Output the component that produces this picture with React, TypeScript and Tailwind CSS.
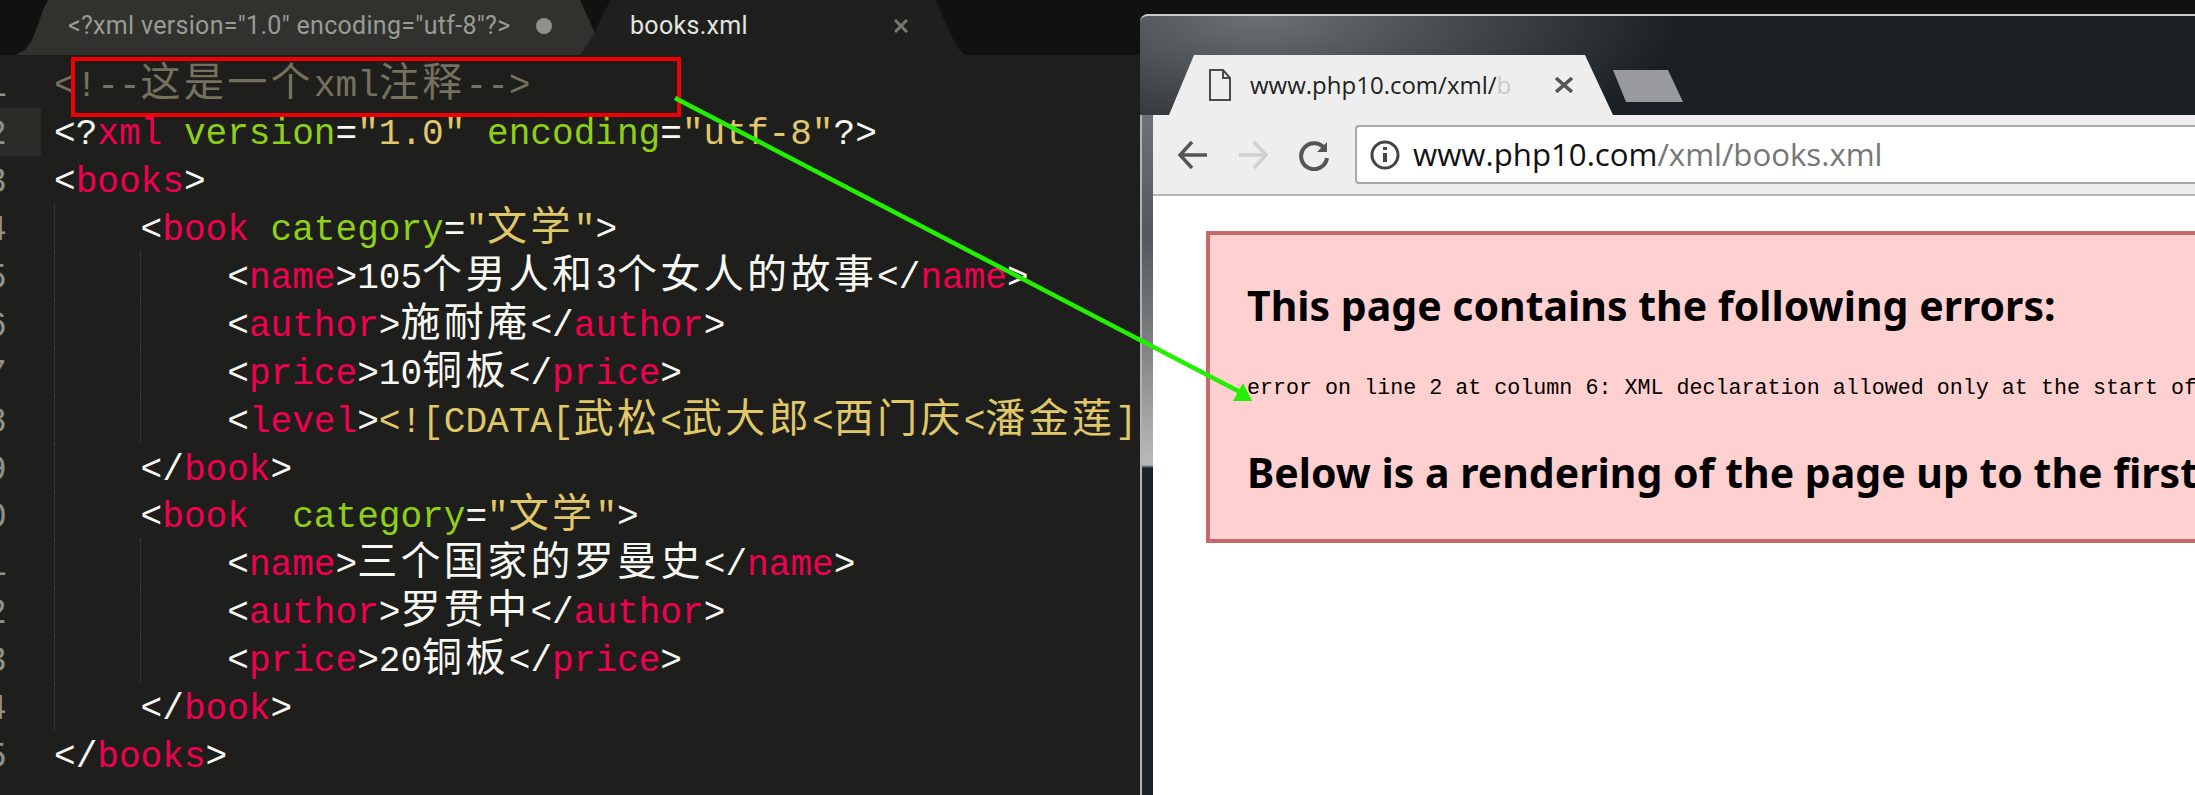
const CJK = "font-['Noto_Sans_CJK_SC','Liberation_Sans',sans-serif] text-[40px] tracking-[3.33px] leading-[0px]";

type Seg = [string, string];

// token colours
const P = "text-[#f8f8f2]";
const T = "text-[#f0004f]";
const A = "text-[#8fd016]";
const S = "text-[#e0c868]";
const C = "text-[#75715e]";
const W = "text-[#f8f8f2]";

const LINES: { indent: number; segs: Seg[] }[] = [
  { indent: 0, segs: [[C, "<!--这是一个xml注释-->"]] },
  { indent: 0, segs: [[P, "<?"], [T, "xml"], [P, " "], [A, "version"], [P, "="], [S, "\"1.0\""], [P, " "], [A, "encoding"], [P, "="], [S, "\"utf-8\""], [P, "?>"]] },
  { indent: 0, segs: [[P, "<"], [T, "books"], [P, ">"]] },
  { indent: 4, segs: [[P, "<"], [T, "book"], [P, " "], [A, "category"], [P, "="], [S, "\"文学\""], [P, ">"]] },
  { indent: 8, segs: [[P, "<"], [T, "name"], [P, ">"], [W, "105个男人和3个女人的故事"], [P, "</"], [T, "name"], [P, ">"]] },
  { indent: 8, segs: [[P, "<"], [T, "author"], [P, ">"], [W, "施耐庵"], [P, "</"], [T, "author"], [P, ">"]] },
  { indent: 8, segs: [[P, "<"], [T, "price"], [P, ">"], [W, "10铜板"], [P, "</"], [T, "price"], [P, ">"]] },
  { indent: 8, segs: [[P, "<"], [T, "level"], [P, ">"], [S, "<![CDATA[武松<武大郎<西门庆<潘金莲]"]] },
  { indent: 4, segs: [[P, "</"], [T, "book"], [P, ">"]] },
  { indent: 4, segs: [[P, "<"], [T, "book"], [P, "  "], [A, "category"], [P, "="], [S, "\"文学\""], [P, ">"]] },
  { indent: 8, segs: [[P, "<"], [T, "name"], [P, ">"], [W, "三个国家的罗曼史"], [P, "</"], [T, "name"], [P, ">"]] },
  { indent: 8, segs: [[P, "<"], [T, "author"], [P, ">"], [W, "罗贯中"], [P, "</"], [T, "author"], [P, ">"]] },
  { indent: 8, segs: [[P, "<"], [T, "price"], [P, ">"], [W, "20铜板"], [P, "</"], [T, "price"], [P, ">"]] },
  { indent: 4, segs: [[P, "</"], [T, "book"], [P, ">"]] },
  { indent: 0, segs: [[P, "</"], [T, "books"], [P, ">"]] },
];

// split a string into runs of latin and chinese so the chinese can sit on a double cell
function Mixed({ text, color }: { text: string; color: string }) {
  const runs = text.match(/[\u4e00-\u9fff]+|[^\u4e00-\u9fff]+/g) ?? [];
  return (
    <>
      {runs.map((run, i) =>
        /[\u4e00-\u9fff]/.test(run) ? (
          <span key={i} className={`${color} ${CJK}`}>{run}</span>
        ) : (
          <span key={i} className={color}>{run}</span>
        )
      )}
    </>
  );
}

function CodeLine({ n, indent, segs }: { n: number; indent: number; segs: Seg[] }) {
  return (
    <div className="flex h-[47.95px] leading-[47.95px] whitespace-pre">
      <div className={`w-[41px] shrink-0 ${n === 2 ? "bg-[#2b2c27]" : ""}`}>
        <div className="w-[7px] pt-[3px] overflow-hidden flex justify-end text-[#8f908a]">{n}</div>
      </div>
      <div className="relative pl-[13px] pt-[3px]">
        {indent >= 4 && <span className="absolute left-[13px] top-0 bottom-0 border-l border-dotted border-[#45463f]" />}
        {indent >= 8 && <span className="absolute left-[99px] top-0 bottom-0 border-l border-dotted border-[#45463f]" />}
        {" ".repeat(indent)}
        {segs.map(([color, text], i) => <Mixed key={i} text={text} color={color} />)}
      </div>
    </div>
  );
}

function SublimeTabs() {
  return (
    <div className="h-[55px] bg-[#11110f] flex items-stretch pl-[15px] text-[25px] tracking-[0.3px] font-['Roboto',sans-serif]">
      <div className="w-[580px] bg-[#31312e] [clip-path:polygon(0_55px,10px_50px,17px_40px,23px_25px,28px_10px,33px_0,565px_0,580px_33px,580px_55px)] flex items-center pl-[53px] pb-[3px] text-[#9a9a96]">
        <span>{'<?xml version="1.0" encoding="utf-8"?>'}</span>
        <span className="ml-[25px] w-[16px] h-[16px] rounded-full bg-[#8f8f8c]" />
      </div>
      <div className="w-[385px] ml-[-15px] bg-[#1f201d] [clip-path:polygon(0_55px,15px_33px,22px_15px,31px_0,356px_0,362px_15px,370px_33px,378px_48px,385px_55px)] flex items-center pl-[50px] pb-[3px] text-[#e4e4e0]">
        <span>books.xml</span>
        <svg className="ml-[146px]" width="14" height="14" viewBox="0 0 14 14" fill="none" stroke="#77776f" strokeWidth="3">
          <path d="M1 1l12 12M13 1L1 13" />
        </svg>
      </div>
    </div>
  );
}

function BrowserHeader() {
  return (
    <div className="h-[101px] flex items-end pl-[29px] rounded-tl-[8px] border-t-[2px] border-[#c9c9c9] bg-[radial-gradient(ellipse_420px_160px_at_120px_0px,#6b7074,#1b2025_100%)]">
      <div className="w-[444px] h-[60px] bg-[#eeeeee] [clip-path:polygon(0_100%,25px_0,calc(100%-28px)_0,100%_100%)] flex items-center pl-[40px] text-[24px] font-['Open_Sans',sans-serif] text-[#222]">
        <svg width="22" height="32" viewBox="0 0 22 32" fill="none" stroke="#4a4a4a" strokeWidth="2">
          <path d="M1 1h13l7 8v22H1zM14 1v8h7" />
        </svg>
        <span className="ml-[19px] w-[288px] overflow-hidden whitespace-nowrap">
          www.php10.com/xml/<span className="text-[#c8c8c8]">b</span>
        </span>
        <svg className="ml-[17px]" width="18" height="16" viewBox="0 0 18 16" fill="none" stroke="#555" strokeWidth="3.5">
          <path d="M1 1l16 14M17 1L1 15" />
        </svg>
      </div>
      <div className="w-[70px] h-[32px] mb-[13px] bg-[#9a9b9e] [clip-path:polygon(0_0,55px_0,100%_100%,13px_100%)]" />
    </div>
  );
}

function Toolbar() {
  return (
    <div className="h-[81px] bg-[#eeeeee] border-b-[2px] border-[#b5b5b5] flex items-center pl-[24px] pr-0">
      <svg width="32" height="32" viewBox="0 0 32 32" fill="none" stroke="#555" strokeWidth="3.5">
        <path d="M30 16H3M15 3L3 16l12 13" />
      </svg>
      <svg className="ml-[28px]" width="32" height="32" viewBox="0 0 32 32" fill="none" stroke="#cfcfcf" strokeWidth="3.5">
        <path d="M2 16h27M17 3l12 13-12 13" />
      </svg>
      <svg className="ml-[29px]" width="32" height="32" viewBox="0 0 32 32" fill="none" stroke="#555" strokeWidth="4">
        <path d="M27 10a13 13 0 1 0 2 9" />
        <path d="M29 3v10H19z" fill="#555" stroke="none" />
      </svg>
      <div className="ml-[25px] flex-1 h-[59px] bg-white rounded-l-[4px] border-y-[2px] border-l-[2px] border-[#a8a8a8] flex items-center pl-[12px] text-[31.2px] font-['Open_Sans',sans-serif]">
        <svg width="32" height="32" viewBox="0 0 32 32" fill="none" stroke="#444" strokeWidth="3">
          <circle cx="16" cy="16" r="13" />
          <path d="M16 14v9" strokeWidth="4" />
          <path d="M16 8v3" strokeWidth="4" />
        </svg>
        <span className="ml-[12px] text-[#111]">www.php10.com</span>
        <span className="text-[#767676]">/xml/books.xml</span>
      </div>
    </div>
  );
}

function ErrorPage() {
  return (
    <div className="flex-1 bg-white pl-[53px] pt-[35px]">
      <div className="h-[312px] border-y-[4px] border-l-[4px] border-[#c46a6a] bg-[#ffd0d0] pl-[37px] overflow-hidden whitespace-nowrap text-black">
        <h3 className="mt-[40px] h-[60px] leading-[60px] text-[41px] font-bold font-['Noto_Sans',sans-serif]">This page contains the following errors:</h3>
        <div className="mt-[39px] h-[30px] leading-[30px] text-[21.7px] font-['Liberation_Mono',monospace]">error on line 2 at column 6: XML declaration allowed only at the start of the document</div>
        <h3 className="mt-[38px] h-[60px] leading-[60px] text-[41px] font-bold font-['Noto_Sans',sans-serif]">Below is a rendering of the page up to the first error.</h3>
      </div>
    </div>
  );
}

export default function App() {
  return (
    <div className="relative w-[2195px] h-[795px] overflow-hidden flex bg-[#11110f]">
      <div className="w-[1140px] shrink-0 flex flex-col">
        <SublimeTabs />
        <div className="flex-1 bg-[#1e1f1c] pt-[5px] text-[36.1px] font-['Liberation_Mono',monospace]">
          {LINES.map((l, i) => <CodeLine key={i} n={i + 1} indent={l.indent} segs={l.segs} />)}
        </div>
      </div>
      <div className="flex-1 min-w-0 pt-[14px] flex flex-col">
        <BrowserHeader />
        <div className="flex-1 flex">
          <div className="w-[13px] shrink-0 border-l-[2px] border-[#b0b4b8] bg-[linear-gradient(180deg,#6d7276_0px,#54585c_120px,#7a7c7e_220px,#b4b6b7_340px,#b4b6b7_350px,#1b242a_353px)]" />
          <div className="flex-1 min-w-0 flex flex-col">
            <Toolbar />
            <ErrorPage />
          </div>
        </div>
      </div>
      {/* annotation layer over the screenshot */}
      <div className="absolute left-[71px] top-[57px] w-[610px] h-[60px] border-[4px] border-[#f00000]" />
      <svg className="absolute left-0 top-0" width="2195" height="795" fill="none">
        <path d="M675 98L1240 392" stroke="#22f000" strokeWidth="4.5" />
        <path d="M1233 401L1252 401L1243 383Z" fill="#22f000" />
      </svg>
    </div>
  );
}
